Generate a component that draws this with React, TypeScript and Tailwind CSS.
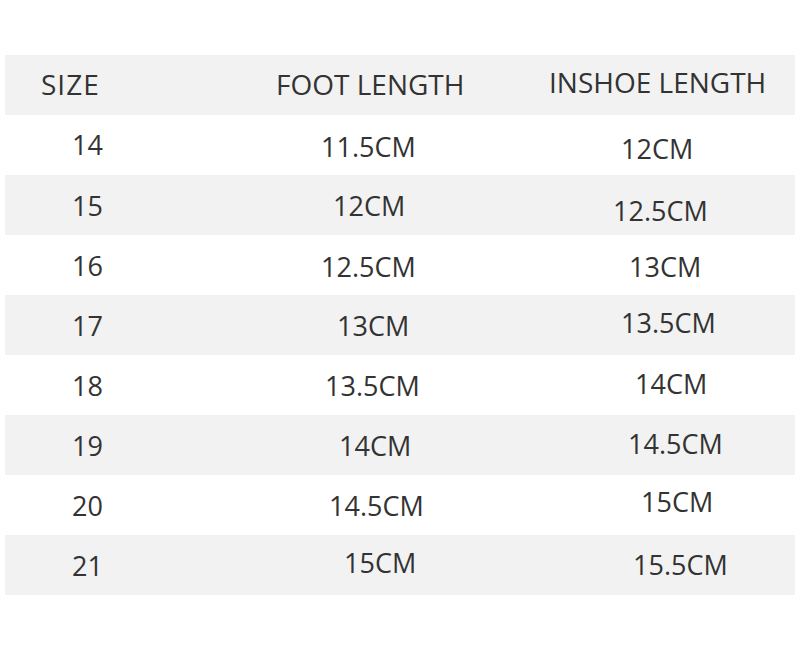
import React from "react";

type Cell = { text: string; cls: string };
type Row = { gray: boolean; cells: [Cell, Cell, Cell] };

const rows: Row[] = [
  {
    gray: false,
    cells: [
      { text: "14", cls: "pl-[67px] mb-[2px]" },
      { text: "11.5CM", cls: "pl-[121px] mt-[2px]" },
      { text: "12CM", cls: "pl-[121px] mt-[7px]" },
    ],
  },
  {
    gray: true,
    cells: [
      { text: "15", cls: "pl-[67px]" },
      { text: "12CM", cls: "pl-[133px]" },
      { text: "12.5CM", cls: "pl-[113px] mt-[11px]" },
    ],
  },
  {
    gray: false,
    cells: [
      { text: "16", cls: "pl-[67px]" },
      { text: "12.5CM", cls: "pl-[121px] mt-[2px]" },
      { text: "13CM", cls: "pl-[129px] mt-[2px]" },
    ],
  },
  {
    gray: true,
    cells: [
      { text: "17", cls: "pl-[67px]" },
      { text: "13CM", cls: "pl-[137px]" },
      { text: "13.5CM", cls: "pl-[121px] mb-[6px]" },
    ],
  },
  {
    gray: false,
    cells: [
      { text: "18", cls: "pl-[67px]" },
      { text: "13.5CM", cls: "pl-[125px]" },
      { text: "14CM", cls: "pl-[135px] mb-[4px]" },
    ],
  },
  {
    gray: true,
    cells: [
      { text: "19", cls: "pl-[67px]" },
      { text: "14CM", cls: "pl-[139px]" },
      { text: "14.5CM", cls: "pl-[128px] mb-[4px]" },
    ],
  },
  {
    gray: false,
    cells: [
      { text: "20", cls: "pl-[67px]" },
      { text: "14.5CM", cls: "pl-[129px]" },
      { text: "15CM", cls: "pl-[141px] mb-[8px]" },
    ],
  },
  {
    gray: true,
    cells: [
      { text: "21", cls: "pl-[67px]" },
      { text: "15CM", cls: "pl-[144px] mb-[6px]" },
      { text: "15.5CM", cls: "pl-[133px] mb-[2px]" },
    ],
  },
];

const colW = ["w-[195px]", "w-[300px]", "w-[295px]"];

export default function App() {
  return (
    <div
      className="w-[800px] h-[657px] bg-white pt-[55px] px-[5px] text-[#333333] font-medium"
      style={{ fontFamily: '"Open Sans", "Noto Sans", sans-serif' }}
    >
      <div className="flex h-[60px] w-[790px] bg-[#f2f2f2] text-[28px]">
        <div className="w-[195px] flex items-center">
          <span className="pl-[36px] mb-[2px] leading-none whitespace-nowrap tracking-[1px]">SIZE</span>
        </div>
        <div className="w-[300px] flex items-center">
          <span className="pl-[76px] mb-[2px] leading-none whitespace-nowrap">FOOT LENGTH</span>
        </div>
        <div className="w-[295px] flex items-center">
          <span className="pl-[49px] mb-[6px] leading-none whitespace-nowrap">INSHOE LENGTH</span>
        </div>
      </div>
      {rows.map((r, i) => (
        <div
          key={i}
          className={
            "flex h-[60px] w-[790px] text-[27px] " + (r.gray ? "bg-[#f2f2f2]" : "bg-white")
          }
        >
          {r.cells.map((c, j) => (
            <div key={j} className={colW[j] + " flex items-center"}>
              <span className={c.cls + " leading-none whitespace-nowrap"}>{c.text}</span>
            </div>
          ))}
        </div>
      ))}
    </div>
  );
}
